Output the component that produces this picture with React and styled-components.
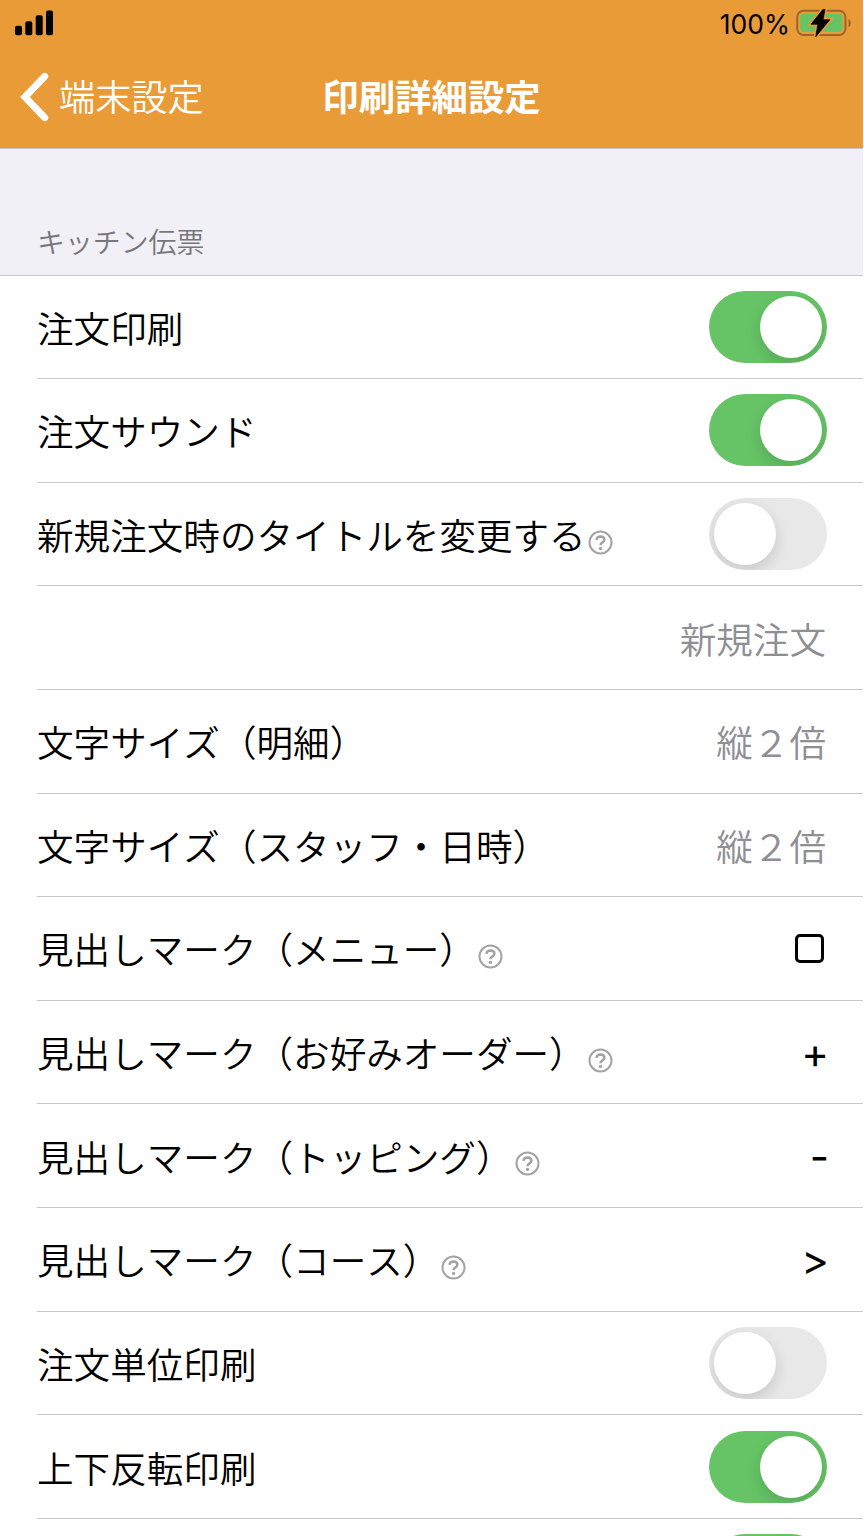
import React from 'react';
import styled, { createGlobalStyle, css } from 'styled-components';

const GlobalStyle = createGlobalStyle`
  html,
  body {
    margin: 0;
    padding: 0;
    background: #fff;
  }

  body {
    height: 1536px;
    overflow: hidden;
  }

  * {
    box-sizing: border-box;
  }
`;

const Screen = styled.main`
  width: 863px;
  height: 1536px;
  overflow: hidden;
  background: #fff;
  color: #000;
  font-family: 'Noto Sans CJK JP DemiLight', 'Noto Sans CJK JP', 'Noto Sans', sans-serif;
  font-size: 36.6px;
  font-weight: 400;
  font-kerning: none;
`;

const TopArea = styled.header`
  height: 148px;
  background: #e89b37;
`;

const StatusBar = styled.div`
  display: flex;
  justify-content: space-between;
  align-items: center;
  height: 45px;
  padding: 0 11px 0 15px;
`;

const Power = styled.div`
  display: flex;
  align-items: center;
  gap: 6px;
`;

const Percent = styled.span`
  font-family: Inter, sans-serif;
  font-size: 26.5px;
  font-weight: 400;
  line-height: 32px;
  padding-top: 3px;
`;

const NavBar = styled.nav`
  display: grid;
  grid-template-columns: 1fr auto 1fr;
  align-items: center;
  height: 103px;
  padding: 0 20px;
  color: #fff;
`;

const Back = styled.a`
  display: flex;
  align-items: center;
  gap: 10px;
  font-size: 36.2px;
  line-height: 48px;
`;

const BackText = styled.span`
  padding-bottom: 4px;
`;

const Title = styled.h1`
  margin: 0;
  padding-bottom: 3px;
  font-family: 'Noto Sans CJK JP', sans-serif;
  font-size: 36.4px;
  font-weight: 700;
  line-height: 48px;
`;

const SectionHeader = styled.h2`
  display: flex;
  align-items: flex-end;
  height: 127.5px;
  margin: 0;
  padding: 0 37px 14px;
  border-top: 1px solid #c4c3c8;
  border-bottom: 1px solid #c8c7cc;
  background: #f1f0f6;
  color: #77777b;
  font-size: 27.9px;
  font-weight: 400;
  line-height: 40px;
`;

const List = styled.ul`
  margin: 0;
  padding: 0 0 0 37px;
  list-style: none;
`;

const Row = styled.li`
  display: flex;
  justify-content: space-between;
  align-items: center;
  height: 103.62px;
  padding-right: 36px;
  border-bottom: 1px solid #c8c7cc;
`;

const Label = styled.div`
  display: flex;
  align-items: center;
  line-height: 54px;
  padding-top: 2px;
  white-space: nowrap;

  svg {
    margin: 14px 0 0 2px;
  }
`;

const Value = styled.span`
  line-height: 54px;
  padding-top: 2px;
  margin-right: 1px;
  color: ${props => (props.$muted ? '#8e8e93' : '#000')};
  ${props => props.$latin && css`
    margin-right: -2px;
    font-family: Inter, sans-serif;
    font-size: 42px;
  `}
`;

const Track = styled.span`
  display: flex;
  justify-content: ${props => (props.$on ? 'flex-end' : 'flex-start')};
  width: 118px;
  height: 72px;
  padding: 5px;
  overflow: hidden;
  border-radius: 36px;
  background: ${props => (props.$on ? '#66c466' : '#e8e8e8')};
`;

const Knob = styled.span`
  width: 62px;
  height: 62px;
  border-radius: 50%;
  background: #fff;
  box-shadow: 0 6px 16px rgba(0, 0, 0, 0.14);
`;

const Square = styled.span`
  width: 29px;
  height: 29px;
  margin: 0 3px 0 0;
  border: 3px solid #000;
  border-radius: 5px;
`;

function SignalIcon() {
    return (
        <svg width="38" height="26" viewBox="0 0 38 26">
            <rect x="0" y="15.7" width="7" height="9.5" rx="2" />
            <rect x="10.3" y="11.2" width="7" height="14" rx="2" />
            <rect x="20.7" y="5.2" width="7" height="20" rx="2" />
            <rect x="31" y="0.4" width="7" height="24.8" rx="2" />
        </svg>
    );
}

const BOLT = 'M27 .3 L15 15.2 H21.8 L19.8 27.7 L33.8 10.8 H27 L29 .3 Z';

function BatteryIcon() {
    return (
        <svg width="56" height="28" viewBox="0 0 56 28">
            <rect x="1.2" y="1.7" width="48.3" height="24.3" rx="6.5" fill="none" stroke="#98662a" strokeWidth="2" />
            <rect x="4.2" y="4.7" width="42.2" height="18.4" rx="4" fill="#66c466" />
            <path d="M52.5 10 Q54.8 11 54.8 14 Q54.8 17 52.5 18 Z" fill="#98662a" />
            <path d={BOLT} fill="#e89b37" stroke="#e89b37" strokeWidth="4" />
            <path d={BOLT} stroke="#000" strokeWidth="0.8" />
        </svg>
    );
}

function BackIcon() {
    return (
        <svg width="29" height="50" viewBox="0 0 29 50" fill="none" stroke="#fff" strokeWidth="7">
            <path d="M24.7 4.4 L5 25 L24.7 45.6" strokeLinecap="round" strokeLinejoin="miter" />
        </svg>
    );
}

function HelpIcon() {
    return (
        <svg width="25" height="25" viewBox="0 0 25 25" fill="none" stroke="#a3a3a3">
            <circle cx="12.5" cy="12.5" r="11" strokeWidth="2" />
            <path d="M8.5 9.9 Q8.8 6.4 12.5 6.4 Q16.4 6.5 16.4 9.7 Q16.3 11.2 14.5 12.4 Q12.5 13.6 12.5 15.2" strokeWidth="2.5" />
            <circle cx="12.5" cy="18.4" r="1.7" fill="#a3a3a3" stroke="none" />
        </svg>
    );
}

function Switch({ on }) {
    return (
        <Track $on={on} role="switch" aria-checked={on}>
            <Knob />
        </Track>
    );
}

const rows = [
    { id: 'print', label: '注文印刷', control: <Switch on /> },
    { id: 'sound', label: '注文サウンド', control: <Switch on /> },
    { id: 'title', label: '新規注文時のタイトルを変更する', help: true, control: <Switch on={false} /> },
    { id: 'title-text', control: <Value $muted>新規注文</Value> },
    { id: 'size-detail', label: '文字サイズ（明細）', control: <Value $muted>縦２倍</Value> },
    { id: 'size-staff', label: '文字サイズ（スタッフ・日時）', control: <Value $muted>縦２倍</Value> },
    { id: 'mark-menu', label: '見出しマーク（メニュー）', help: true, control: <Square /> },
    { id: 'mark-order', label: '見出しマーク（お好みオーダー）', help: true, control: <Value $latin>+</Value> },
    { id: 'mark-topping', label: '見出しマーク（トッピング）', help: true, control: <Value $latin>-</Value> },
    { id: 'mark-course', label: '見出しマーク（コース）', help: true, control: <Value $latin>&gt;</Value> },
    { id: 'unit', label: '注文単位印刷', control: <Switch on={false} /> },
    { id: 'flip', label: '上下反転印刷', control: <Switch on /> },
    { id: 'next', control: <Switch on /> },
];

export default function App() {
    return (
        <>
            <GlobalStyle />
            <Screen>
                <TopArea>
                    <StatusBar>
                        <SignalIcon />
                        <Power>
                            <Percent>100%</Percent>
                            <BatteryIcon />
                        </Power>
                    </StatusBar>
                    <NavBar>
                        <Back>
                            <BackIcon />
                            <BackText>端末設定</BackText>
                        </Back>
                        <Title>印刷詳細設定</Title>
                    </NavBar>
                </TopArea>
                <SectionHeader>キッチン伝票</SectionHeader>
                <List>
                    {rows.map(({ id, label, help, control }) => (
                        <Row key={id}>
                            <Label>
                                {label}
                                {help && <HelpIcon />}
                            </Label>
                            {control}
                        </Row>
                    ))}
                </List>
            </Screen>
        </>
    );
}
